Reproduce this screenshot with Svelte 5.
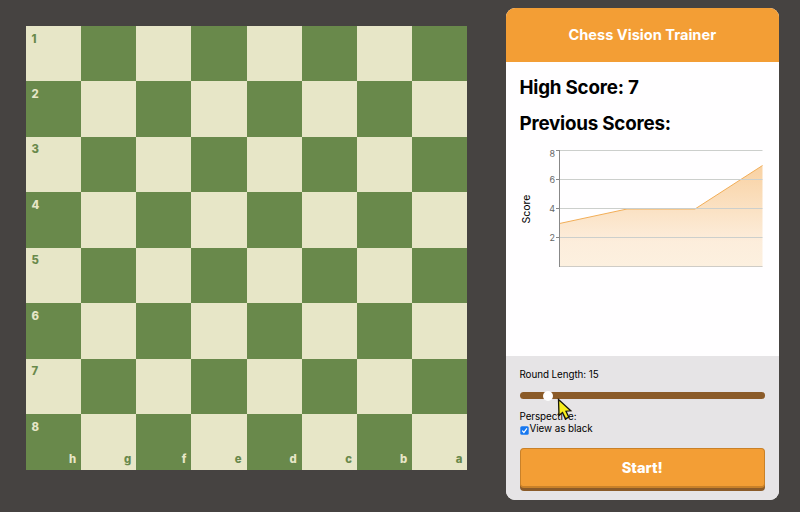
<script>
  const ranks = [1, 2, 3, 4, 5, 6, 7, 8];
  const files = ['h', 'g', 'f', 'e', 'd', 'c', 'b', 'a'];
  const ticks = [
    { v: 8, y: 11 },
    { v: 6, y: 40 },
    { v: 4, y: 69 },
    { v: 2, y: 98 }
  ];
  let length = $state(15);
  let black = $state(true);
</script>

<main>
  <div class="board">
    {#each ranks as rank, r}
      {#each files as file, f}
        <div class="square" class:dark={(r + f) % 2 === 1}>
          {#if f === 0}<span class="rank">{rank}</span>{/if}
          {#if r === 7}<span class="file">{file}</span>{/if}
        </div>
      {/each}
    {/each}
  </div>

  <aside>
    <header>Chess Vision Trainer</header>
    <section class="scores">
      <h2>High Score: 7</h2>
      <h2>Previous Scores:</h2>
      <svg class="chart" width="250" height="135" viewBox="0 0 250 135">
        <defs>
          <linearGradient id="area" x1="0" y1="0" x2="0" y2="1">
            <stop offset="0" stop-color="#f29d35" stop-opacity=".46" />
            <stop offset=".75" stop-color="#f0a03a" stop-opacity=".18" />
            <stop offset="1" stop-color="#f0a83a" stop-opacity=".16" />
          </linearGradient>
        </defs>
        <path d="M39.500 83.500L107 69H175L242.500 25.500V127H39.500Z" fill="url(#area)" />
        <path d="M39.500 83.500L107 69H175L242.500 25.500" fill="none" stroke="#f2ae58" />
        {#each ticks as t}
          <path d="M40 {t.y - 0.5}H242.500" stroke="#cccfcc" />
          <path d="M36 {t.y - 0.5}H40" stroke="#888" />
          <text x="35" y={t.v === 8 ? 17 : t.y + 3} text-anchor="end" class="tick">{t.v}</text>
        {/each}
        <path d="M40 126.500H242.500" stroke="#cfccc6" />
        <path d="M39.500 10V127" stroke="#888" />
        <text class="axis" transform="translate(10 69) rotate(-90)" text-anchor="middle">Score</text>
      </svg>
    </section>
    <section class="controls">
      <label class="length" for="length">Round Length: {length}</label>
      <input id="length" type="range" min="5" max="105" bind:value={length} />
      <div class="perspective">Perspective:</div>
      <label class="view">
        <input type="checkbox" bind:checked={black} />
        <svg width="9" height="9" viewBox="0 0 9 9">
          <rect x=".3" y=".3" width="8.400" height="8.400" rx="1.500" fill="#1677f0" />
          {#if black}<path d="M2.200 4.700L3.900 6.500L6.900 2.300" fill="none" stroke="#fff" stroke-width="1.200" />{/if}
        </svg>
        <span>View as black</span>
      </label>
      <button>Start!</button>
    </section>
  </aside>

  <svg class="pointer" width="16" height="24" viewBox="0 0 16 24">
    <path d="M1.500 1.500L2 17.500L5.500 14.500L8.600 20.800L11.800 19.200L9 13.200L13.800 12.800Z" fill="#f8ee1c" stroke="#17170c" stroke-width="1.300" />
  </svg>
</main>

<style>
  :global(body) {
    background: #464341;
  }
  main {
    position: relative;
    box-sizing: border-box;
    width: 800px;
    height: 512px;
    padding: 7.500px 21.500px 12.500px 26px;
    display: flex;
    justify-content: space-between;
    background: #464341;
    font-family: Inter, 'Liberation Sans', sans-serif;
    color: #000;
    overflow: hidden;
  }
  .board {
    margin-top: 18.500px;
    width: 441.300px;
    height: 443.500px;
    display: grid;
    grid-template: repeat(8, 1fr) / repeat(8, 1fr);
  }
  .square {
    display: flex;
    justify-content: space-between;
    padding: 6.600px 5px 3.900px 5.500px;
    background: #e7e6c7;
    color: #69894b;
    font-size: 11.300px;
    line-height: 13px;
    font-weight: 800;
  }
  .square.dark {
    background: #69894b;
    color: #e7e6c7;
  }
  .file {
    align-self: flex-end;
    margin-left: auto;
  }
  aside {
    width: 272.500px;
    height: 492px;
    display: flex;
    flex-direction: column;
    border-radius: 9px;
    overflow: hidden;
    background: #fffeff;
  }
  header {
    height: 54.500px;
    display: flex;
    align-items: center;
    justify-content: center;
    background: #f39e35;
    color: #fff;
    font-size: 14.600px;
    font-weight: 700;
  }
  .scores {
    flex: 1;
    padding: 14px 13.500px 0;
  }
  h2 {
    margin: 0 0 12px;
    font-size: 18.800px;
    line-height: 24px;
    font-weight: 700;
    letter-spacing: -0.220px;
  }
  .chart {
    display: block;
    margin-top: -8px;
  }
  .tick {
    font-size: 9px;
    fill: #666;
  }
  .axis {
    font-size: 10.500px;
  }
  .controls {
    box-sizing: border-box;
    height: 143.500px;
    padding: 12px 13.500px 0;
    display: flex;
    flex-direction: column;
    background: #e6e4e6;
    font-size: 9.800px;
    line-height: 12px;
    letter-spacing: -0.050px;
  }
  .length,
  .perspective,
  .view span {
    position: relative;
    top: 0.600px;
  }
  input[type='range'] {
    appearance: none;
    width: 245.500px;
    height: 7px;
    margin: 12px 0 11.500px;
    border-radius: 4px;
    background: #8b5b29;
  }
  input[type='range']::-webkit-slider-thumb {
    appearance: none;
    width: 10px;
    height: 10px;
    border-radius: 50%;
    background: #fff;
  }
  .view {
    display: flex;
    align-items: center;
  }
  .view input {
    position: absolute;
    opacity: 0;
  }
  .view svg {
    margin: 3px 1px 0 0;
  }
  button {
    width: 245.500px;
    height: 40px;
    margin-top: 13px;
    padding: 2px 0 0;
    border: 1.500px solid #c98129;
    border-bottom-width: 2px;
    border-radius: 4px;
    background: #f39e35;
    box-shadow: 0 3px 0 #8b5b29;
    color: #fff;
    font: 800 14.600px/18px Inter, sans-serif;
  }
  .pointer {
    position: absolute;
    left: 557px;
    top: 398px;
  }
</style>
